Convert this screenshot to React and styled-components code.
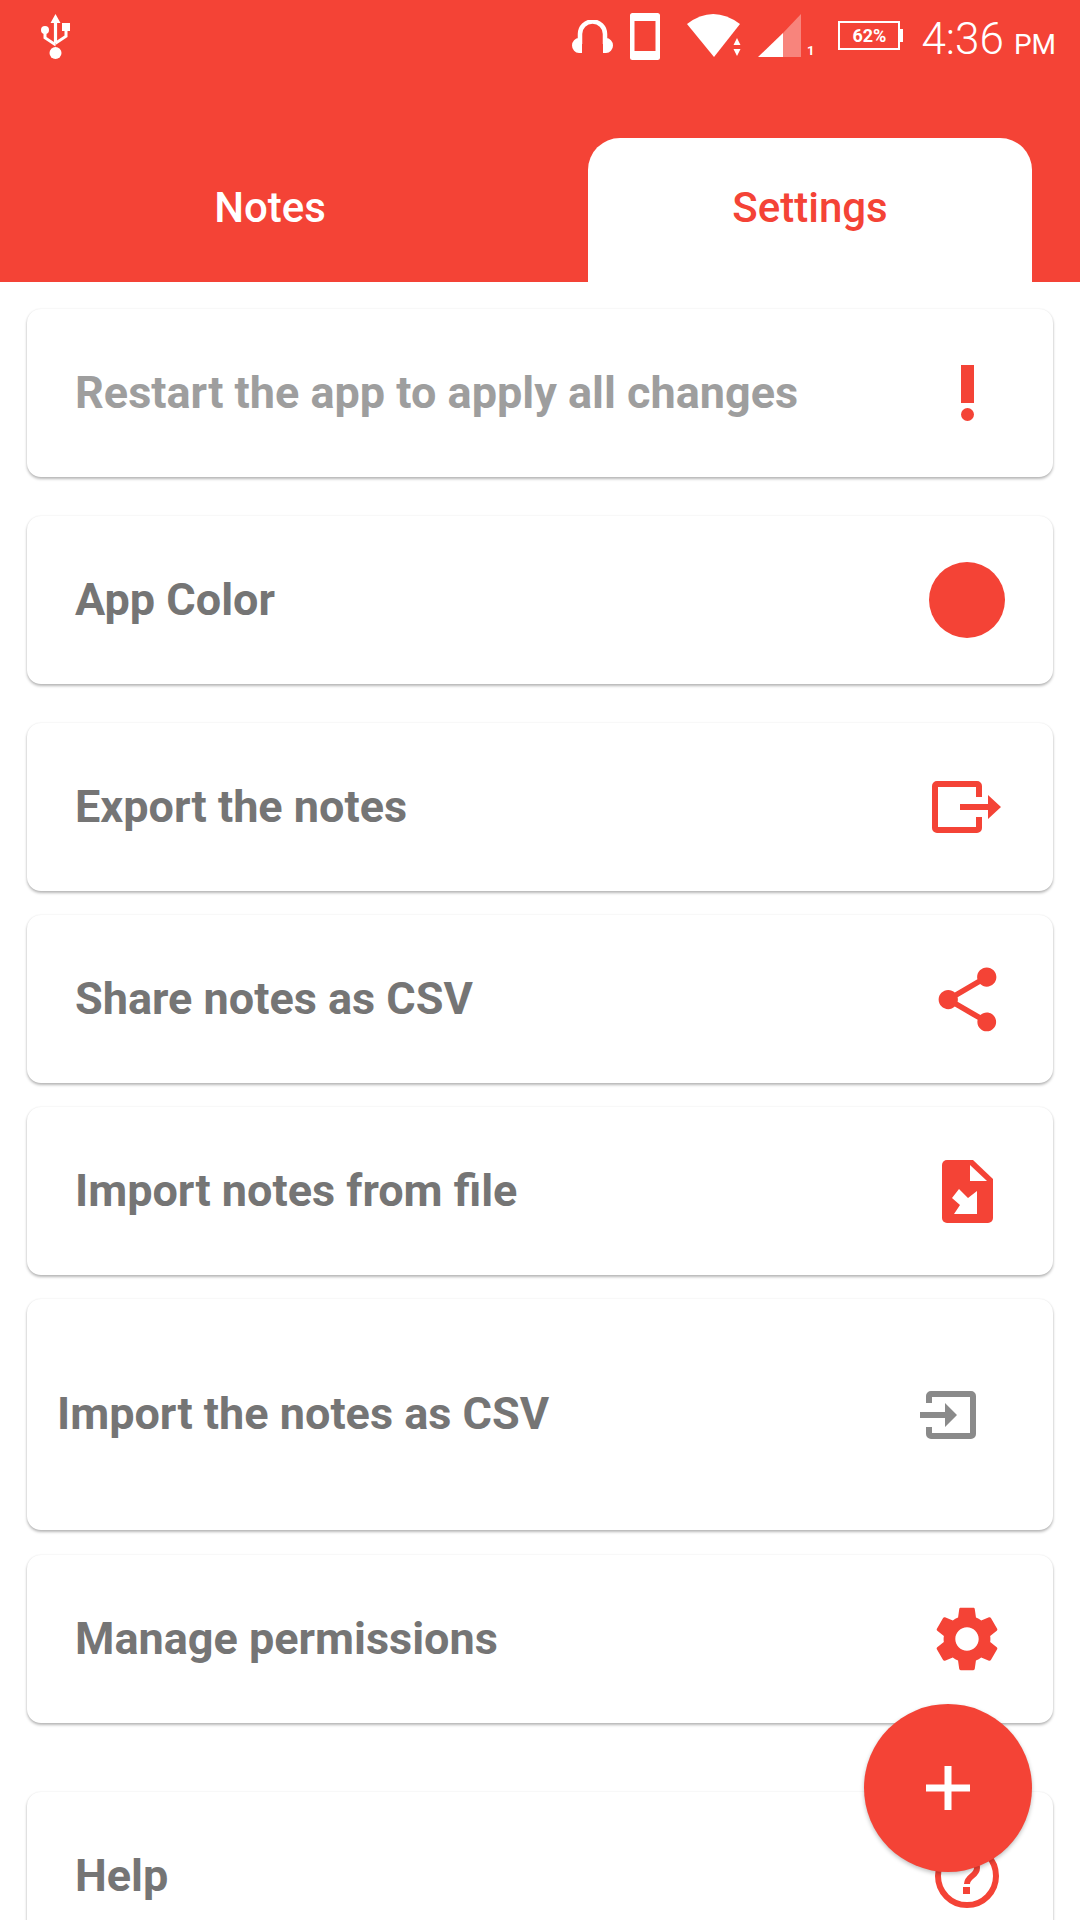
import React from "react";
import styled, { createGlobalStyle } from "styled-components";

const RED = "#f44336";

const GlobalStyle = createGlobalStyle`
	html, body {
		margin: 0;
		padding: 0;
		background: #fff;
		overflow: hidden;
	}
	* {
		box-sizing: border-box;
	}
`;

const UsbIcon = () => (
	<svg width="29" height="45" viewBox="0 0 29 45" fill="#fff">
		<path d="M14.5 0l5 9h-3.4v20h-3.2V9H9.500z" />
		<circle cx="14.500" cy="39" r="6" />
		<circle cx="4" cy="16" r="4" />
		<rect x="21" y="9" width="8" height="8" />
		<path d="M2.500 18h3v5l9 6v3.500l-12-8z" />
		<path d="M23.500 16h3v7l-12 8v-3.500l9-6z" />
	</svg>
);

const HeadphonesIcon = () => (
	<svg width="41" height="33" viewBox="0 0 41 33">
		<path d="M8 24V14a12.500 12.500 0 0 1 25 0v10" fill="none" stroke="#fff" strokeWidth="4.500" />
		<path d="M10 18H7a7 7.500 0 0 0 0 15h3zM31 18h3a7 7.500 0 0 1 0 15h-3z" fill="#fff" />
	</svg>
);

const PhoneIcon = () => (
	<svg width="30" height="47" viewBox="0 0 30 47">
		<path
			fillRule="evenodd"
			fill="#fff"
			d="M2.500 0h25A2.500 2.500 0 0 1 30 2.500v42a2.500 2.500 0 0 1-2.500 2.500h-25A2.500 2.500 0 0 1 0 44.500v-42A2.500 2.500 0 0 1 2.500 0zM4.500 8v30h21V8z"
		/>
	</svg>
);

const WifiIcon = () => (
	<svg width="55" height="43" viewBox="0 0 55 43" fill="#fff">
		<path d="M0 10Q26-10 53 10L27 43z" />
		<path d="M50 24l3.500 7h-7zM50 42l3.500-7h-7z" />
	</svg>
);

const SignalIcon = () => (
	<svg width="44" height="43" viewBox="0 0 44 43">
		<path d="M25 19L43 0v43H25z" fill="#fff" opacity="0.35" />
		<path d="M0 43L25 19v24z" fill="#fff" />
	</svg>
);

const AlertIcon = () => (
	<svg width="16" height="56" viewBox="0 0 16 56" fill={RED}>
		<rect x="2" y="0" width="13" height="38" />
		<circle cx="8.500" cy="49.500" r="6.500" />
	</svg>
);

const ExportIcon = () => (
	<svg width="70" height="52" viewBox="0 0 70 52">
		<path d="M47 16V5a2 2 0 0 0-2-2H5a2 2 0 0 0-2 2v42a2 2 0 0 0 2 2h40a2 2 0 0 0 2-2V36" fill="none" stroke={RED} strokeWidth="6" />
		<path d="M28 23h28V14l13 12-13 12V29H28z" fill={RED} />
	</svg>
);

const ShareIcon = () => (
	<svg width="77" height="77" viewBox="0 0 24 24" fill={RED}>
		<path d="M18 16.080c-.76 0-1.440.3-1.960.77L8.910 12.700c.05-.23.090-.46.090-.7s-.040-.47-.090-.7l7.050-4.110c.54.5 1.250.81 2.040.81 1.660 0 3-1.340 3-3s-1.340-3-3-3-3 1.340-3 3c0 .24.040.47.090.7L8.040 9.810C7.500 9.310 6.790 9 6 9c-1.660 0-3 1.340-3 3s1.340 3 3 3c.79 0 1.500-.31 2.040-.81l7.120 4.160c-.05.21-.08.43-.08.65 0 1.610 1.310 2.920 2.920 2.920 1.610 0 2.920-1.310 2.920-2.920s-1.310-2.920-2.920-2.920z" />
	</svg>
);

const FileImportIcon = () => (
	<svg width="51" height="63" viewBox="0 0 51 63">
		<path d="M5 0h26l20 19v39a5 5 0 0 1-5 5H5a5 5 0 0 1-5-5V5a5 5 0 0 1 5-5z" fill={RED} />
		<path d="M28 5l17 16H28z" fill="#fff" />
		<path d="M35 31v23H12l6-9-8-7 7-9 9 9z" fill="#fff" />
	</svg>
);

const InputIcon = () => (
	<svg width="56" height="48" viewBox="0 0 56 48">
		<path d="M9 12V5a2 2 0 0 1 2-2h40a2 2 0 0 1 2 2v38a2 2 0 0 1-2 2H11a2 2 0 0 1-2-2v-7" fill="none" stroke="#8a8a8a" strokeWidth="6" />
		<path d="M0 21h25V12l12 12-12 12v-9H0z" fill="#8a8a8a" />
	</svg>
);

const GearIcon = () => (
	<svg width="78" height="78" viewBox="0 0 24 24" fill={RED}>
		<path d="M19.140 12.940c.04-.3.060-.61.060-.94 0-.32-.02-.64-.07-.94l2.030-1.580c.18-.14.23-.41.120-.61l-1.920-3.320c-.12-.22-.37-.29-.59-.22l-2.390.96c-.5-.38-1.030-.7-1.620-.94l-.36-2.540c-.04-.24-.24-.41-.48-.41h-3.840c-.24 0-.43.17-.47.41l-.36 2.540c-.59.24-1.130.57-1.620.94l-2.390-.96c-.22-.08-.47 0-.59.22L2.740 8.870c-.12.21-.08.47.12.61l2.030 1.580c-.05.3-.09.63-.09.94s.02.64.07.94l-2.030 1.580c-.18.14-.23.41-.12.61l1.920 3.320c.12.22.37.29.59.22l2.390-.96c.5.38 1.030.7 1.620.94l.36 2.540c.05.24.24.41.48.41h3.840c.24 0 .44-.17.47-.41l.36-2.540c.59-.24 1.130-.56 1.620-.94l2.390.96c.22.08.47 0 .59-.22l1.920-3.320c.12-.22.07-.47-.12-.61l-2.010-1.580zM12 15.600c-1.980 0-3.600-1.620-3.600-3.600s1.620-3.600 3.600-3.600 3.600 1.620 3.600 3.600-1.620 3.600-3.600 3.600z" />
	</svg>
);

const HelpIcon = () => (
	<svg width="64" height="64" viewBox="0 0 64 64">
		<circle cx="32" cy="32" r="29" fill="none" stroke={RED} strokeWidth="6" />
		<path d="M22 24a10 9 0 0 1 20 0c0 8-10 8-10 16" fill="none" stroke={RED} strokeWidth="6" />
		<rect x="28" y="43" width="7" height="7" fill={RED} />
	</svg>
);

function ColorDot() {
	return <Dot />;
}

const rows = [
	{ label: "Restart the app to apply all changes", icon: <AlertIcon />, muted: true, gap: 27 },
	{ label: "App Color", icon: <ColorDot />, gap: 39 },
	{ label: "Export the notes", icon: <ExportIcon />, gap: 39 },
	{ label: "Share notes as CSV", icon: <ShareIcon />, gap: 24 },
	{ label: "Import notes from file", icon: <FileImportIcon />, gap: 24 },
	{ label: "Import the notes as CSV", icon: <InputIcon />, gap: 24, tall: true },
	{ label: "Manage permissions", icon: <GearIcon />, gap: 25 },
	{ label: "Help", icon: <HelpIcon />, gap: 69 },
];

const App = () => {
	return (
		<Screen>
			<GlobalStyle />
			<Header>
				<StatusBar>
					<UsbIcon />
					<StatusRight>
						<HeadphonesIcon />
						<PhoneIcon />
						<WifiIcon />
						<SignalWrap>
							<SignalIcon />
							<SimNumber>1</SimNumber>
						</SignalWrap>
						<Battery>62%</Battery>
						<Clock>
							4:36<Meridiem>PM</Meridiem>
						</Clock>
					</StatusRight>
				</StatusBar>
				<Tabs>
					<Tab>Notes</Tab>
					<Tab $active>Settings</Tab>
				</Tabs>
			</Header>
			<List>
				{rows.map((row) => (
					<Card key={row.label} $gap={row.gap} $tall={row.tall}>
						<Label $muted={row.muted}>{row.label}</Label>
						<IconSlot $tall={row.tall}>{row.icon}</IconSlot>
					</Card>
				))}
			</List>
			<Fab>
				<svg width="44" height="44" viewBox="0 0 44 44" fill="#fff">
					<rect x="18.500" y="0" width="7" height="44" />
					<rect x="0" y="18.500" width="44" height="7" />
				</svg>
			</Fab>
		</Screen>
	);
};

const Screen = styled.div`
	position: relative;
	width: 1080px;
	height: 1920px;
	overflow: hidden;
	background: #fff;
	font-family: Roboto, "Liberation Sans", sans-serif;
`;

const Header = styled.header`
	display: flex;
	flex-direction: column;
	justify-content: space-between;
	height: 282px;
	background: ${RED};
`;

const StatusBar = styled.div`
	display: flex;
	justify-content: space-between;
	align-items: flex-start;
	padding: 14px 24px 0 41px;
`;

const StatusRight = styled.div`
	display: flex;
	align-items: flex-start;
	height: 47px;

	> svg:nth-child(1) {
		margin: 6px 17px 0 0;
	}
	> svg:nth-child(2) {
		margin: -1px 27px 0 0;
	}
	> svg:nth-child(3) {
		margin-right: 16px;
	}
`;

const SignalWrap = styled.div`
	display: flex;
	align-items: flex-end;
	height: 43px;
	margin-right: 24px;
`;

const SimNumber = styled.span`
	margin-left: 5px;
	font-size: 13px;
	line-height: 12px;
	font-weight: 700;
	color: #fff;
`;

const Battery = styled.div`
	display: flex;
	align-items: center;
	justify-content: center;
	width: 62px;
	height: 29px;
	margin: 7px 21px 0 0;
	border: 2px solid #fff;
	font-size: 18px;
	font-weight: 700;
	color: #fff;
	position: relative;

	&::after {
		content: "";
		position: absolute;
		right: -5px;
		top: 6px;
		width: 3px;
		height: 13px;
		background: #fff;
	}
`;

const Clock = styled.div`
	font-size: 44px;
	line-height: 47px;
	font-weight: 300;
	color: #fff;
	margin-top: 2px;
	white-space: nowrap;
`;

const Meridiem = styled.span`
	font-size: 28px;
	font-weight: 400;
	margin-left: 10px;
`;

const Tabs = styled.div`
	display: flex;
	gap: 96px;
	padding-left: 48px;
`;

const Tab = styled.div`
	display: flex;
	align-items: center;
	justify-content: center;
	width: 444px;
	height: 144px;
	padding-bottom: 6px;
	border-radius: 32px 32px 0 0;
	background: ${(props) => (props.$active ? "#fff" : "transparent")};
	color: ${(props) => (props.$active ? RED : "#fff")};
	font-size: 42px;
	font-weight: 500;
`;

const List = styled.div`
	display: flex;
	flex-direction: column;
	padding: 0 27px;
`;

const Card = styled.div`
	display: flex;
	flex-shrink: 0;
	align-items: center;
	justify-content: space-between;
	height: ${(props) => (props.$tall ? "231px" : "168px")};
	margin-top: ${(props) => props.$gap}px;
	padding-left: ${(props) => (props.$tall ? "31px" : "49px")};
	border-radius: 14px;
	background: #fff;
	box-shadow: 0 2px 3px rgba(0, 0, 0, 0.28), 0 0 2px rgba(0, 0, 0, 0.08);
`;

const Label = styled.span`
	margin: 0 0 2px -1px;
	font-size: 45px;
	font-weight: 700;
	color: ${(props) => (props.$muted ? "#9e9e9e" : "#757575")};
`;

const IconSlot = styled.div`
	display: flex;
	align-items: center;
	justify-content: center;
	width: ${(props) => (props.$tall ? "210px" : "172px")};
`;

const Dot = styled.div`
	width: 76px;
	height: 76px;
	border-radius: 50%;
	background: ${RED};
`;

const Fab = styled.div`
	position: absolute;
	left: 864px;
	top: 1704px;
	display: flex;
	align-items: center;
	justify-content: center;
	width: 168px;
	height: 168px;
	border-radius: 50%;
	background: ${RED};
	box-shadow: 0 2px 4px rgba(0, 0, 0, 0.25);
`;

export default App;
